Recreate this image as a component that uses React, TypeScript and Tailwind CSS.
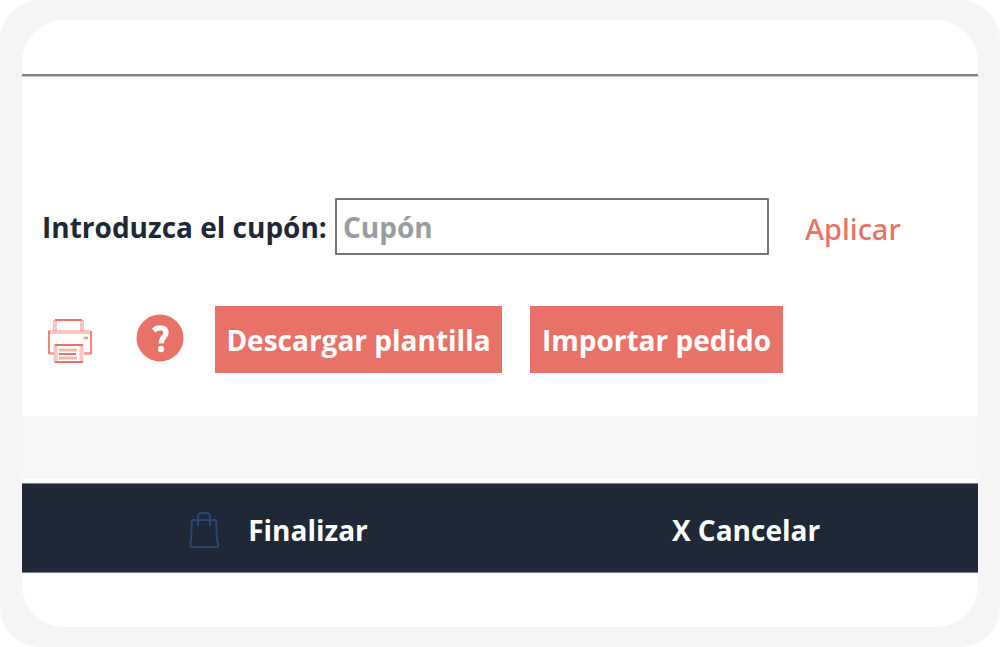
import type { FormEvent } from 'react';

function PrinterIcon() {
  return (
    <svg viewBox="0 0 46 46" className="h-[46px] w-[46px]" fill="none" stroke="#e97268" aria-hidden="true">
      <path d="M9 13V2M36 2V13" strokeWidth="4" strokeOpacity=".4" />
      <path d="M9 2H36" strokeWidth="2" />
      <path d="M2 14H44" strokeWidth="4" strokeOpacity=".4" />
      <path d="M3 13V36M45 13V36" strokeWidth="2" strokeOpacity=".85" />
      <path d="M3 35.500H8M38 35.500H45" strokeWidth="3" strokeOpacity=".6" />
      <path d="M37 20H42" strokeWidth="3" strokeOpacity=".4" />
      <path d="M39 20H42" strokeWidth="2" strokeOpacity=".6" />
      <path d="M9.500 26V45M35.500 26V45" strokeWidth="4" strokeOpacity=".4" />
      <path d="M9 27H37M9 44H37" strokeWidth="2" />
      <path d="M13 32H31M13 40H31" strokeWidth="3" strokeOpacity=".5" />
      <path d="M13 36H30" strokeWidth="2" />
    </svg>
  );
}

function HelpIcon() {
  return (
    <svg viewBox="0 0 48 48" className="h-12 w-12" aria-hidden="true">
      <circle cx="24" cy="24" r="23.500" fill="#e97268" />
      <path d="M17.500 16.500C20 14.200 23 13.500 26 14C31 15 31 20 28 22.800C26 25 25.200 26.500 25.200 29.500" fill="none" stroke="#fff" strokeWidth="5.200" />
      <circle cx="25" cy="35" r="3.200" fill="#fff" />
    </svg>
  );
}

function BagIcon() {
  return (
    <svg viewBox="0 0 32 38" className="h-[38px] w-8" fill="none" stroke="#2b4674" strokeWidth="2" aria-hidden="true">
      <path d="M4 9H28M4 9L3 29Q1 36 4 36H28Q32 36 29 29L28 9" />
      <path d="M10 15V6Q10 2 14 2H18Q22 2 22 6V15" />
    </svg>
  );
}

export default function App() {
  const onSubmit = (event: FormEvent) => event.preventDefault();

  return (
    <div className="min-h-screen rounded-[40px] bg-[#f5f5f5] px-[22px] py-5 font-['Open_Sans','Noto_Sans',sans-serif] text-[28px] leading-9 font-bold text-[#1e2836]">
      <main className="overflow-hidden rounded-[42px] bg-white pb-[54px]">
        <div className="h-14 border-b-2 border-[#808080] shadow-[0_1px_0_#c0c0c0]" />

        <form onSubmit={onSubmit} className="flex items-center px-5 pt-[122px]">
          <label htmlFor="coupon" className="w-[293px] shrink-0 whitespace-nowrap">
            Introduzca el cupón:
          </label>
          <input
            id="coupon"
            type="text"
            placeholder="Cupón"
            className="h-[57px] w-[434px] min-w-0 rounded-[1px] border-2 border-[#757575] bg-white px-1.5 outline-none placeholder:text-[#999ca1] placeholder:opacity-100"
          />
          <button type="submit" className="ml-9 pt-1 font-['Noto_Sans',sans-serif] text-[29px] font-medium text-[#e97268]">
            Aplicar
          </button>
        </form>

        <div className="flex items-start px-6 pt-[51px] pb-[43px]">
          <button type="button" aria-label="Imprimir" className="mt-3 shrink-0">
            <PrinterIcon />
          </button>
          <button type="button" aria-label="Ayuda" className="mt-2 mr-[31px] ml-11 shrink-0">
            <HelpIcon />
          </button>
          <button type="button" className="h-[67px] w-[287px] bg-[#e97268] whitespace-nowrap text-white">
            Descargar plantilla
          </button>
          <button type="button" className="ml-7 h-[67px] w-[253px] bg-[#e97268] whitespace-nowrap text-white">
            Importar pedido
          </button>
        </div>

        <div className="h-[63px] bg-[#f7f7f7]" />

        <footer className="mt-1 grid h-[90px] grid-cols-2 border-y border-[#7d838b] bg-[#1e2836] text-white">
          <button type="button" className="flex items-center justify-center gap-7 pt-1 pl-[34px]">
            <BagIcon />
            Finalizar
          </button>
          <button type="button" className="pt-1 pl-[14px]">X Cancelar</button>
        </footer>
      </main>
    </div>
  );
}
